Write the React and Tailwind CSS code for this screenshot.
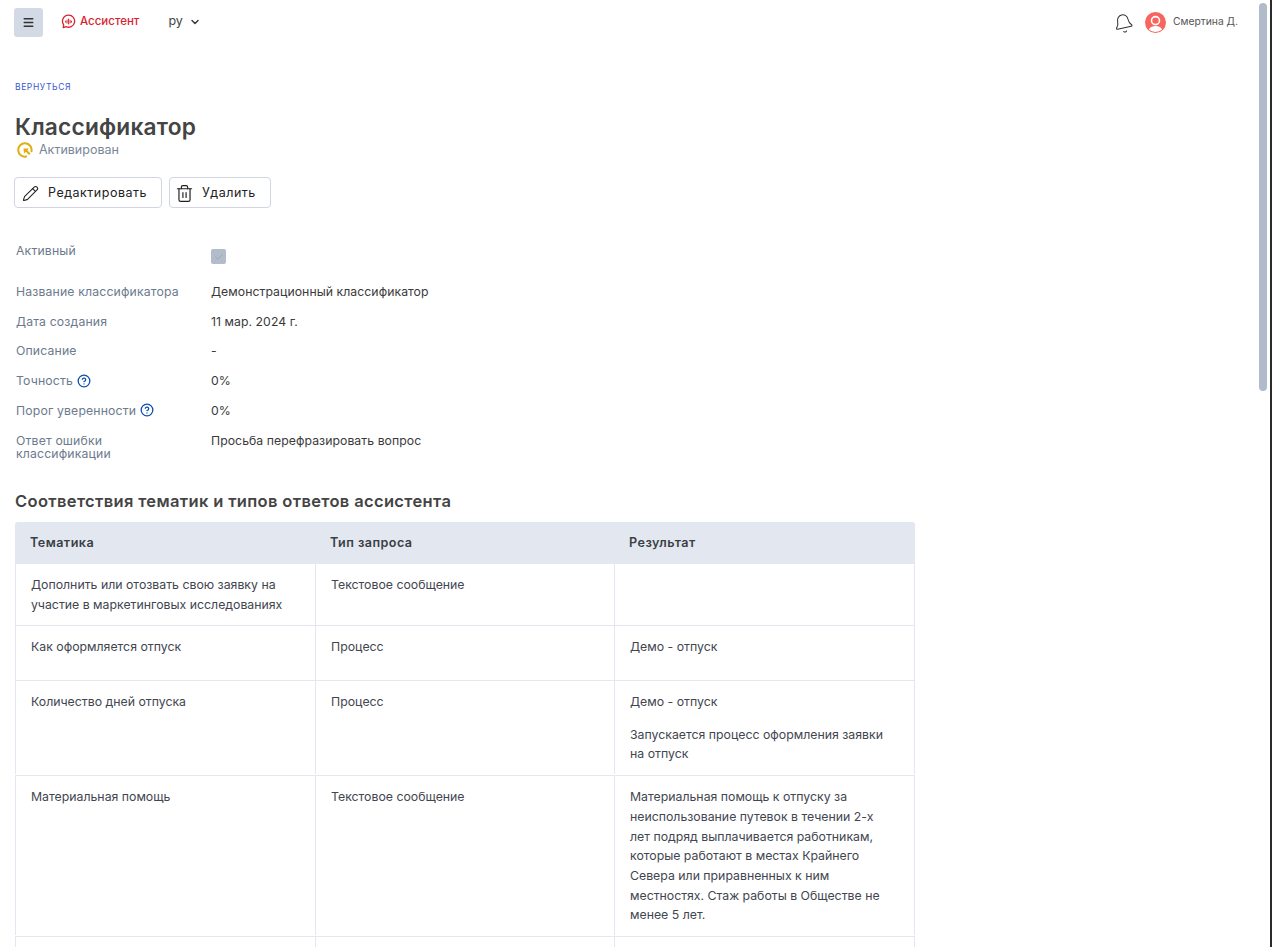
import React from "react";
import { Pencil, Trash2, Bell, ChevronDown, Check, CircleHelp, Menu } from "lucide-react";

const body = { fontFamily: "Inter, 'Noto Sans', sans-serif" };

function Logo() {
  return (
    <svg width="15" height="15" viewBox="0 0 15 15" fill="none" className="shrink-0">
      <path d="M7.600 1.200a6 6 0 1 1-2.600 11.400L2.200 13.600l.5-2.800A6 6 0 0 1 7.600 1.200Z" stroke="#d8232f" strokeWidth="1.300" strokeLinejoin="round" />
      <path d="M4.600 7.200v1M6 6v3.200M7.600 5v5M9.100 6.200v2.800M10.500 7.200v1" stroke="#d8232f" strokeWidth="1" strokeLinecap="round" />
    </svg>
  );
}

function StatusIcon() {
  return (
    <svg width="16" height="16" viewBox="0 0 16 16" fill="none" className="shrink-0">
      <path d="M14.500 9.200A6.700 6.700 0 1 0 9.200 14.500" stroke="#dfae13" strokeWidth="2" strokeLinecap="round" />
      <path d="M6.500 6.500h5.600l-1.800 1.800 3.200 3.200-1.500 1.500-3.200-3.200-1.800 1.800Z" fill="#dfae13" />
    </svg>
  );
}

function Avatar() {
  return (
    <svg width="21" height="21" viewBox="0 0 21 21" className="shrink-0">
      <circle cx="10.500" cy="10.500" r="10.500" fill="#f8655f" />
      <circle cx="10.500" cy="8.600" r="4" fill="none" stroke="#fff" strokeWidth="1.600" />
      <path d="M3.800 17.500c1.600-2.600 4-3.400 6.700-3.400s5.100.8 6.700 3.400a10.500 10.500 0 0 1-13.400 0Z" fill="#fff" />
    </svg>
  );
}

function Field({ label, help, children, className = "" }) {
  return (
    <div className={`flex text-[12.25px] leading-[13.7px] ${className}`}>
      <div className="flex items-start w-[195px] shrink-0 pr-4 text-[#6c7a8d] tracking-[0.15px]">
        {label}
        {help && <CircleHelp size={14} strokeWidth={2.200} className="ml-[4px] -mt-[0.5px] text-[#0b4fae]" />}
      </div>
      <div className="text-[#3a3a3a] tracking-[0.05px]">{children}</div>
    </div>
  );
}

const rows = [
  { topic: ["Дополнить или отозвать свою заявку на", "участие в маркетинговых исследованиях"], type: "Текстовое сообщение", result: null, pad: "" },
  { topic: ["Как оформляется отпуск"], type: "Процесс", result: [["Демо - отпуск"]], gap: "mb-[12.5px]", pad: "" },
  { topic: ["Количество дней отпуска"], type: "Процесс", result: [["Демо - отпуск"], ["Запускается процесс оформления заявки", "на отпуск"]], gap: "mb-[13px]", lastGap: "", pad: "pb-[0.5px]" },
  {
    topic: ["Материальная помощь"],
    type: "Текстовое сообщение",
    pad: "pb-[1px]",
    result: [[
      "Материальная помощь к отпуску за",
      "неиспользование путевок в течении 2-х",
      "лет подряд выплачивается работникам,",
      "которые работают в местах Крайнего",
      "Севера или приравненных к ним",
      "местностях. Стаж работы в Обществе не",
      "менее 5 лет.",
    ]],
  },
];

function Lines({ lines }) {
  return lines.map((l) => <div key={l} className="whitespace-nowrap">{l}</div>);
}

export default function App() {
  return (
    <div style={body} className="relative h-[947px] overflow-hidden bg-white text-[#3a3a3a]">
      <header className="flex items-center h-[44px] pl-[14px] pr-[34px]">
        <button className="flex items-center justify-center w-[29px] h-[29px] rounded-[3px] bg-[#d3dae5]">
          <Menu size={13} strokeWidth={2.500} className="text-[#333]" />
        </button>
        <div className="flex items-center gap-[4px] ml-[18px] -mt-[1px]">
          <Logo />
          <span className="text-[11.5px] font-medium text-[#d8232f]">Ассистент</span>
        </div>
        <div className="flex items-center ml-[29px] text-[12.5px] -mt-[1px] text-[#444]">
          ру
          <ChevronDown size={12} strokeWidth={2.800} className="ml-[6px] text-[#333]" />
        </div>
        <div className="ml-auto flex items-center">
          <Bell size={21} strokeWidth={1.200} className="-rotate-12 text-[#333] mr-[11px] mt-[2px]" />
          <Avatar />
          <span className="ml-[7px] text-[10.3px] text-[#555]">Смертина Д.</span>
        </div>
      </header>

      <main className="pl-[15px]">
        <a className="block mt-[37px] text-[8.5px] leading-[12px] tracking-[0.6px] text-[#3a58cf]">ВЕРНУТЬСЯ</a>
        <h1 className="mt-[21px] text-[22.7px] leading-[26px] font-semibold tracking-[0.2px] text-[#444]">Классификатор</h1>
        <div className="flex items-center mt-[1px] text-[12.5px] leading-[18px] text-[#7a8698]">
          <span className="ml-[2px] mr-[6px]"><StatusIcon /></span>Активирован
        </div>
        <div className="flex gap-[7px] mt-[18px] -ml-px">
          <button className="flex items-center h-[31px] w-[148px] pl-[7px] pt-px border border-[#cfd6e2] rounded-[4px] text-[12.5px] tracking-[0.5px] text-[#222]">
            <Pencil size={17} strokeWidth={1.500} className="mr-[9px]" />Редактировать
          </button>
          <button className="flex items-center h-[31px] w-[102px] pl-[5px] pt-px border border-[#cfd6e2] rounded-[4px] text-[12.5px] tracking-[0.5px] text-[#222]">
            <Trash2 size={19} strokeWidth={1.500} className="mr-[8px]" />Удалить
          </button>
        </div>

        <div className="mt-[36px] pl-[1px]">
          <Field label="Активный" className="h-[34px]">
            <span className="flex items-center justify-center mt-[5px] w-[15px] h-[15px] rounded-[2px] bg-[#b3bccb]">
              <Check size={10} strokeWidth={1.500} className="text-[#8d97a8]" />
            </span>
          </Field>
          <div className="flex flex-col gap-[16px] mt-[7px]">
            <Field label="Название классификатора">Демонстрационный классификатор</Field>
            <Field label="Дата создания">11 мар. 2024 г.</Field>
            <Field label="Описание">-</Field>
            <Field label="Точность" help>0%</Field>
            <Field label="Порог уверенности" help>0%</Field>
            <Field label={<span className="block w-[150px]">Ответ ошибки классификации</span>}>Просьба перефразировать вопрос</Field>
          </div>
        </div>

        <h2 className="mt-[29px] text-[16.5px] leading-[22px] font-semibold tracking-[0.35px] text-[#444]">Соответствия тематик и типов ответов ассистента</h2>

        <div className="mt-[10px] w-[900px] text-[12.3px] leading-[19.7px] text-[#3f4650]">
          <div className="grid grid-cols-[300px_299px_301px] h-[42px] items-center bg-[#e3e7f0] rounded-t-[3px] text-[12.6px] font-semibold tracking-[0.45px] text-[#3a3f46]">
            <div className="pl-[15px]">Тематика</div>
            <div className="pl-[15px]">Тип запроса</div>
            <div className="pl-[15px]">Результат</div>
          </div>
          {rows.map((r, i) => (
            <div key={i} className={`grid grid-cols-[300px_299px_301px] border-b border-[#e3e7f0] ${r.pad}`}>
              <div className="pt-[11.5px] pb-[10px] pl-[15px] border-l border-[#e3e7f0]"><Lines lines={r.topic} /></div>
              <div className="pt-[11.5px] pb-[10px] pl-[15px] border-l border-[#e3e7f0]">{r.type}</div>
              <div className="pt-[11.5px] pb-[10px] pl-[15px] border-x border-[#e3e7f0]">
                {r.result && r.result.map((p, j) => (
                  <div key={j} className={j === r.result.length - 1 && r.lastGap !== undefined ? r.lastGap : r.gap || ""}><Lines lines={p} /></div>
                ))}
              </div>
            </div>
          ))}
          <div className="grid grid-cols-[300px_299px_301px] h-[40px]">
            <div className="border-l border-[#e3e7f0]" />
            <div className="border-l border-[#e3e7f0]" />
            <div className="border-x border-[#e3e7f0]" />
          </div>
        </div>
      </main>

      <div className="absolute right-[5px] top-[3px] w-[8px] h-[388px] rounded-full bg-[#b1bccb]" />
      <div className="absolute right-0 top-0 bottom-0 w-[2px] bg-[#2b2b2b]" />
    </div>
  );
}
